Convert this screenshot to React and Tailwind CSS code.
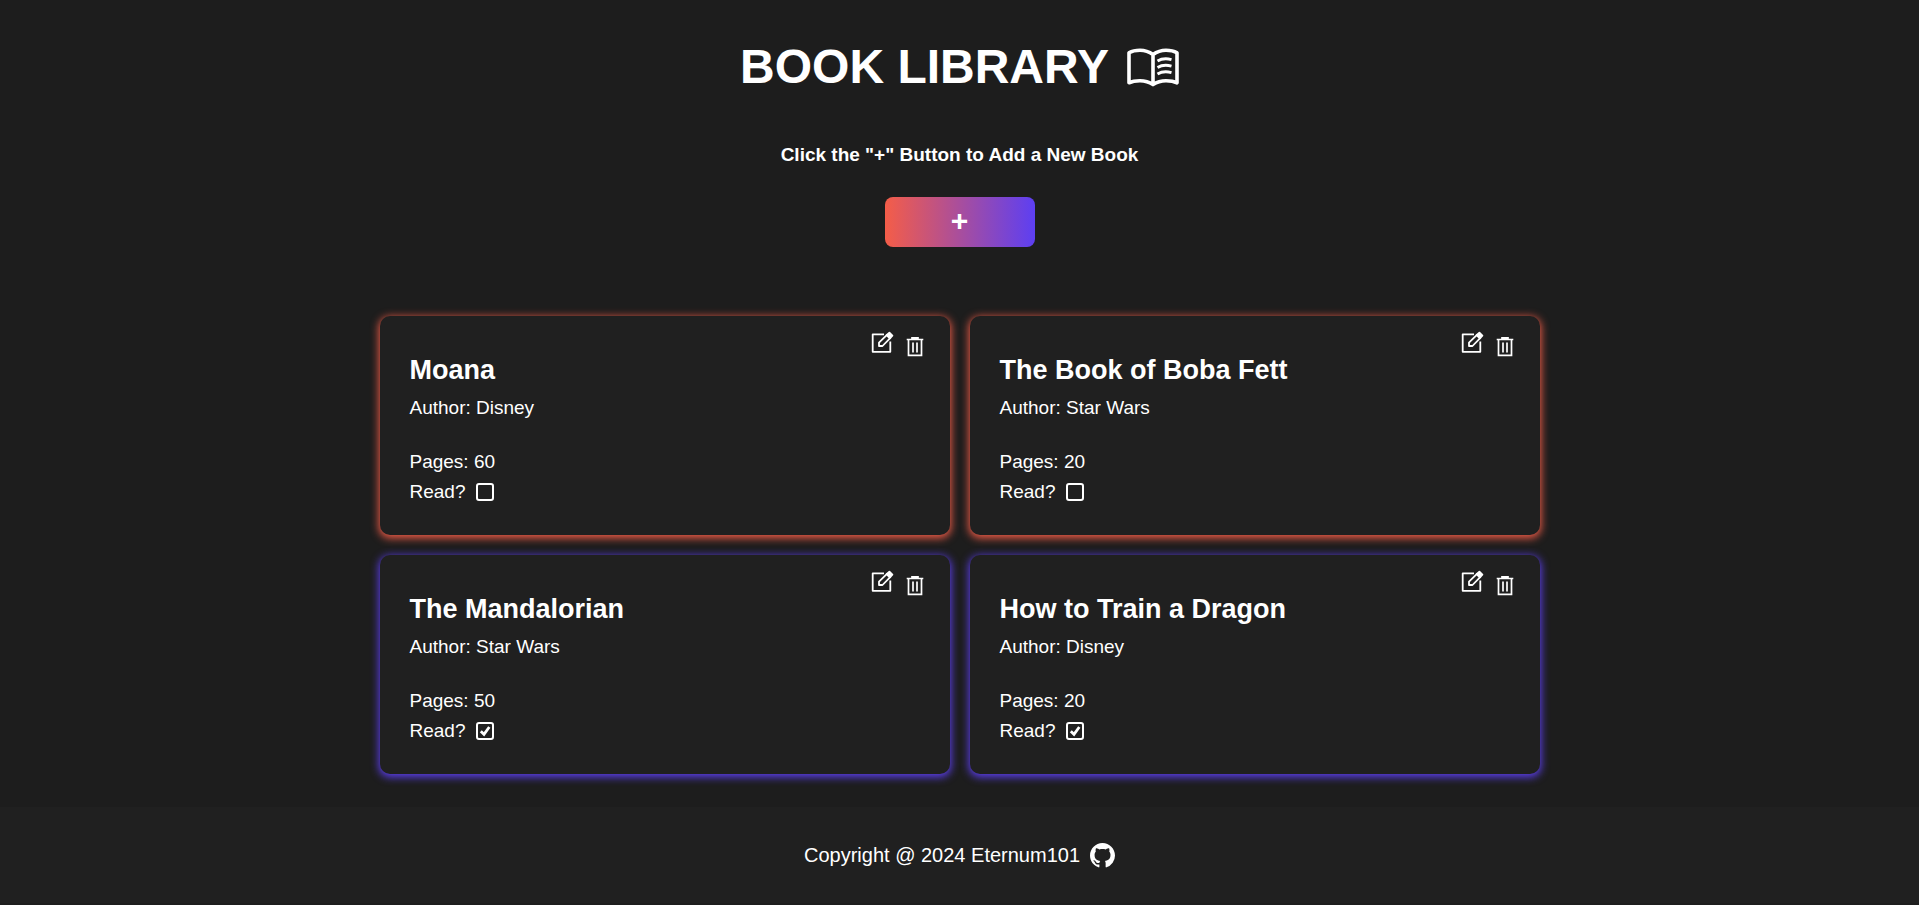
import React, { useState } from "react";

const initialBooks = [
  { id: 1, title: "Moana", author: "Disney", pages: 60, read: false },
  { id: 2, title: "The Book of Boba Fett", author: "Star Wars", pages: 20, read: false },
  { id: 3, title: "The Mandalorian", author: "Star Wars", pages: 50, read: true },
  { id: 4, title: "How to Train a Dragon", author: "Disney", pages: 20, read: true },
];

function BookIcon() {
  return (
    <svg className="h-[42px] w-13" viewBox="0 -2 52 42" fill="none" stroke="currentColor" strokeWidth="3.6" strokeLinejoin="round" strokeLinecap="round" aria-hidden="true">
      <path d="M26 6.5C22 3.6 17.500 2.200 13 2.200C9 2.200 5 3 2 4.800V34.800C5 33.300 9 32.700 13 32.700C17.500 32.700 22 33.900 26 36.600C30 33.900 34.500 32.700 39 32.700C43 32.700 47 33.300 50 34.800V4.800C47 3 43 2.200 39 2.200C34.500 2.200 30 3.600 26 6.500V36" />
      <path strokeWidth="2.800" strokeLinecap="butt" d="M30.500 13C34.500 10.600 39.500 10.200 44.500 11.600M30.500 19.500C34.500 17.100 39.500 16.700 44.500 18.100M30.500 26C34.500 23.600 39.500 23.200 44.500 24.600" />
    </svg>
  );
}

function EditIcon() {
  return (
    <svg className="h-6 w-6" viewBox="0 0 24 24" fill="none" stroke="currentColor" strokeWidth="1.800" aria-hidden="true">
      <path strokeLinejoin="round" d="M14 4.300H2.700V21.800H20.300V11.500" />
      <path strokeLinejoin="round" d="M9 16V12.600L17.200 4.600L20.400 7.800L12.500 16Z" />
      <path fill="currentColor" strokeLinejoin="round" d="M16.600 5.200L19.400 2.600L22.400 5.600L19.800 8.400Z" />
    </svg>
  );
}

function TrashIcon() {
  return (
    <svg className="h-6 w-6" viewBox="0 0 24 24" fill="none" stroke="currentColor" strokeWidth="1.700" aria-hidden="true">
      <path d="M3.700 5.500H20.300M9 5V3.800H15V5M5.500 5.500V21.300H18.500V5.500M10 8.500V18.500M14 8.500V18.500" />
    </svg>
  );
}

function BookCard({ book, onToggle, onRemove }) {
  const glow = book.read
    ? "shadow-[0_2px_8px_1px_#5d3ff2]"
    : "shadow-[0_2px_8px_1px_#f45d48]";
  return (
    <article className={`relative rounded-[10px] bg-[#202020] px-[30px] pt-9 pb-7 ${glow}`}>
      <div className="absolute top-[14px] right-[23px] flex gap-[9px]">
        <button type="button" aria-label={`Edit ${book.title}`} className="h-6 w-6 cursor-pointer"><EditIcon /></button>
        <button type="button" aria-label={`Delete ${book.title}`} onClick={onRemove} className="mt-1 h-6 w-6 cursor-pointer"><TrashIcon /></button>
      </div>
      <h2 className="text-[27px] leading-9 font-bold">{book.title}</h2>
      <p className="mt-[5px] leading-[30px]">Author: {book.author}</p>
      <p className="mt-6 leading-[30px]">Pages: {book.pages}</p>
      <label className="flex w-fit items-center gap-[10px] leading-[30px]">
        Read?
        <span className="relative flex">
          <input type="checkbox" checked={book.read} onChange={onToggle} className="peer size-[18px] appearance-none rounded-[3px] border-2 border-white" />
          <svg className="pointer-events-none absolute inset-0 hidden size-[18px] peer-checked:block" viewBox="0 0 18 18" fill="none" stroke="currentColor" strokeWidth="2.800" aria-hidden="true">
            <path d="M4.800 9.200L8 12.300L13.300 5" />
          </svg>
        </span>
      </label>
    </article>
  );
}

export default function App() {
  const [books, setBooks] = useState(initialBooks);
  const toggle = (id) => setBooks(books.map((b) => (b.id === id ? { ...b, read: !b.read } : b)));
  const remove = (id) => setBooks(books.filter((b) => b.id !== id));

  return (
    <div className="flex min-h-screen flex-col bg-[#1d1d1d] font-['Liberation_Sans',Arial,sans-serif] text-[19px] text-white">
      <header className="flex flex-col items-center pt-[37px]">
        <h1 className="flex items-center gap-[18px] text-5xl leading-[60px] font-bold">
          BOOK LIBRARY
          <BookIcon />
        </h1>
        <p className="mt-[43px] leading-[30px] font-bold">Click the "+" Button to Add a New Book</p>
        <button type="button" aria-label="Add a new book" className="mt-[27px] h-[50px] w-[150px] cursor-pointer rounded-lg bg-linear-to-r/srgb from-[#f45d48] to-[#5d3ff2] pb-[2px] text-[30px] leading-none font-bold">
          +
        </button>
      </header>
      <main className="mx-auto mt-[69px] mb-[33px] grid w-full max-w-[1160px] grid-cols-2 gap-5">
        {books.map((book) => (
          <BookCard key={book.id} book={book} onToggle={() => toggle(book.id)} onRemove={() => remove(book.id)} />
        ))}
      </main>
      <footer className="flex items-center justify-center gap-[10px] bg-[#202020] py-8 text-xl">
        <p className="leading-8">Copyright @ 2024 Eternum101</p>
        <a href="https://github.com/Eternum101" aria-label="GitHub">
          <svg className="size-[25px]" viewBox="0 0 16 16" fill="currentColor" aria-hidden="true">
            <path d="M8 0C3.580 0 0 3.580 0 8c0 3.540 2.290 6.530 5.470 7.590.4.070.55-.17.55-.38 0-.19-.01-.82-.01-1.490-2.010.37-2.530-.49-2.690-.94-.09-.23-.48-.94-.82-1.130-.28-.15-.68-.52-.01-.53.63-.01 1.080.58 1.230.82.72 1.210 1.870.87 2.330.66.07-.52.28-.87.51-1.070-1.780-.2-3.640-.89-3.640-3.950 0-.87.31-1.590.82-2.150-.08-.2-.36-1.020.08-2.120 0 0 .67-.21 2.200.82.64-.18 1.320-.27 2-.27s1.360.09 2 .27c1.530-1.040 2.200-.82 2.200-.82.44 1.100.16 1.920.08 2.120.51.56.82 1.270.82 2.150 0 3.070-1.870 3.750-3.650 3.950.29.25.54.73.54 1.480 0 1.070-.01 1.930-.01 2.200 0 .21.15.46.55.38A8.010 8.010 0 0 0 16 8c0-4.420-3.580-8-8-8Z" />
          </svg>
        </a>
      </footer>
    </div>
  );
}
